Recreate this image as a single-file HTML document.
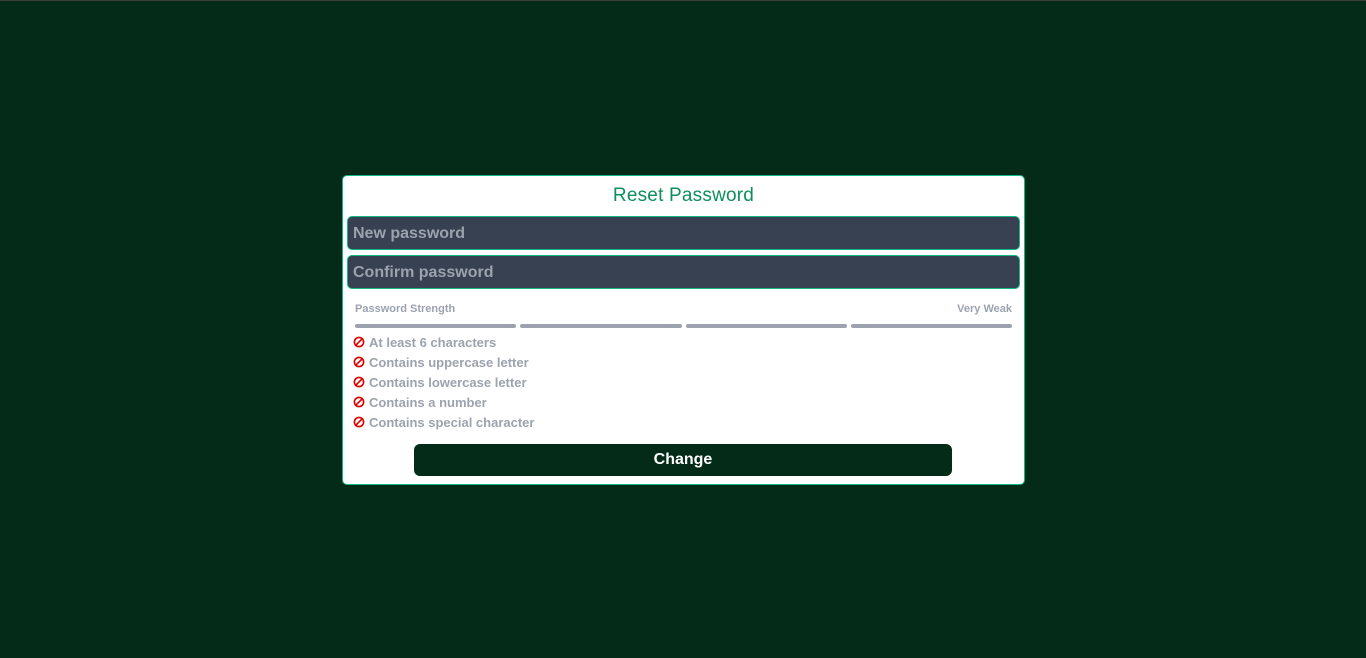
<!DOCTYPE html>
<html><head><style>
*{box-sizing:border-box;margin:0;padding:0}
body{width:1366px;height:658px;background:#032b17;font-family:"Liberation Sans",sans-serif;position:relative;overflow:hidden;border-top:1px solid #3a3f3c}
.card{position:absolute;left:342px;top:174px;width:683px;height:310px;background:#fff;border:1px solid #10b981;border-radius:5px}
h1{text-align:center;color:#0c8f5c;font-size:19px;font-weight:normal;margin-top:9px;height:31px;letter-spacing:0.2px}
.in{margin:0 4px 5px 4px;height:34px;background:#374151;border:1px solid #10b981;border-radius:5px;color:#9ca3af;font-size:16px;font-weight:bold;padding:8px 0 0 5px}
.sl{display:flex;justify-content:space-between;margin:14px 12px 0 12px;font-size:11px;font-weight:bold;color:#9ca3af}
.bars{display:flex;gap:4px;margin:9px 12px 0 12px}
.bars div{flex:1;height:4px;border-radius:2px;background:#9ca3af}
ul{list-style:none;margin:4px 0 0 10px}
li{font-size:13px;font-weight:bold;color:#9ca3af;height:20px;display:flex;align-items:center;gap:4px}
li svg{width:12px;height:12px}
.btn{position:absolute;left:71px;top:268px;width:538px;height:32px;background:#032b17;border-radius:6px;color:#fff;font-weight:bold;font-size:16px;text-align:center;line-height:32px}
</style></head><body>
<div class="card">
<h1>Reset Password</h1>
<div class="in">New password</div>
<div class="in">Confirm password</div>
<div class="sl"><span>Password Strength</span><span>Very Weak</span></div>
<div class="bars"><div></div><div></div><div></div><div></div></div>
<ul>
<li><svg viewBox="0 0 12 12"><circle cx="6" cy="6" r="4.6" fill="none" stroke="#dc0000" stroke-width="1.6"/><line x1="2.8" y1="9.2" x2="9.2" y2="2.8" stroke="#dc0000" stroke-width="1.6"/></svg>At least 6 characters</li>
<li><svg viewBox="0 0 12 12"><circle cx="6" cy="6" r="4.6" fill="none" stroke="#dc0000" stroke-width="1.6"/><line x1="2.8" y1="9.2" x2="9.2" y2="2.8" stroke="#dc0000" stroke-width="1.6"/></svg>Contains uppercase letter</li>
<li><svg viewBox="0 0 12 12"><circle cx="6" cy="6" r="4.6" fill="none" stroke="#dc0000" stroke-width="1.6"/><line x1="2.8" y1="9.2" x2="9.2" y2="2.8" stroke="#dc0000" stroke-width="1.6"/></svg>Contains lowercase letter</li>
<li><svg viewBox="0 0 12 12"><circle cx="6" cy="6" r="4.6" fill="none" stroke="#dc0000" stroke-width="1.6"/><line x1="2.8" y1="9.2" x2="9.2" y2="2.8" stroke="#dc0000" stroke-width="1.6"/></svg>Contains a number</li>
<li><svg viewBox="0 0 12 12"><circle cx="6" cy="6" r="4.6" fill="none" stroke="#dc0000" stroke-width="1.6"/><line x1="2.8" y1="9.2" x2="9.2" y2="2.8" stroke="#dc0000" stroke-width="1.6"/></svg>Contains special character</li>
</ul>
<div class="btn">Change</div>
</div>
</body></html>
